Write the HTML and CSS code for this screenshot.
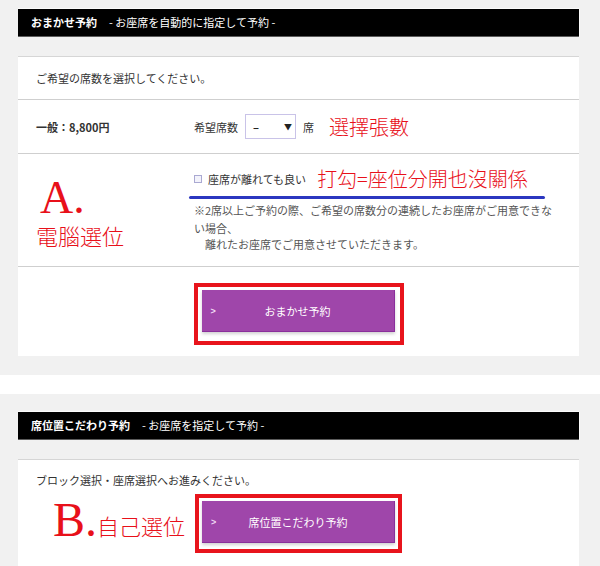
FILE: index.html
```html
<!DOCTYPE html>
<html lang="ja">
<head>
<meta charset="utf-8">
<title>おまかせ予約</title>
<link rel="stylesheet" href="styles.css">
</head>
<body>
<section class="sec sec-first">
  <h2 class="bar"><span class="bar-title">おまかせ予約</span><span class="bar-sub">- お座席を自動的に指定して予約 -</span></h2>
  <div class="card">
    <div class="row row-intro">ご希望の席数を選択してください。</div>
    <div class="row row-price">
      <div class="price">一般：8,800円</div>
      <div class="seats">
        <span>希望席数</span>
        <span class="select"><span class="select-val">–</span><span class="select-arrow">▼</span></span>
        <span>席</span>
        <span class="red red-seats">選擇張數</span>
      </div>
    </div>
    <div class="row row-option">
      <div class="anno">
        <div class="anno-letter">A.</div>
        <div class="anno-text">電腦選位</div>
      </div>
      <div class="option">
        <div class="check-line">
          <label class="check"><span class="box"></span>座席が離れても良い</label>
          <span class="red red-check">打勾=座位分開也沒關係</span>
        </div>
        <div class="marker"></div>
        <p class="note">※2席以上ご予約の際、ご希望の席数分の連続したお座席がご用意できな<br>い場合、</p>
        <p class="note note-2">　離れたお座席でご用意させていただきます。</p>
      </div>
    </div>
    <div class="row row-btn">
      <div class="frame frame-a">
        <a class="btn"><span class="chev">&gt;</span><span class="btn-text">おまかせ予約</span><span></span></a>
      </div>
    </div>
  </div>
</section>
<div class="band"></div>
<section class="sec sec-second">
  <h2 class="bar"><span class="bar-title">席位置こだわり予約</span><span class="bar-sub">- お座席を指定して予約 -</span></h2>
  <div class="card card2">
    <p class="intro2">ブロック選択・座席選択へお進みください。</p>
    <div class="b-row">
      <div class="anno-b">
        <span class="anno-letter-b">B.</span>
        <span class="anno-text-b">自己選位</span>
      </div>
      <div class="frame frame-b">
        <a class="btn"><span class="chev">&gt;</span><span class="btn-text">席位置こだわり予約</span><span></span></a>
      </div>
      <div></div>
    </div>
  </div>
</section>
</body>
</html>
```
FILE: styles.css
```css
* { box-sizing: border-box; }

body {
  margin: 0;
  background: #f1f1f1;
  font-family: "Noto Sans CJK JP", "Liberation Sans", sans-serif;
  font-size: 11px;
  color: #333;
}

.sec { padding: 0 21px 0 18px; }
.sec-first { padding-top: 9px; }
.sec-second { padding-top: 18px; }

.bar {
  margin: 0;
  height: 28px;
  background: #000;
  border-bottom: 1px solid #5c5c5c;
  box-shadow: 0 -1px 0 #fbfbfb, 1px 0 0 #fbfbfb;
  color: #fff;
  display: flex;
  align-items: center;
  padding-left: 13px;
  font-size: 11px;
  font-weight: normal;
  line-height: 1;
}
.bar-title { font-weight: bold; margin-right: 12px; }

.card {
  margin-top: 19px;
  background: #fff;
  border-top: 1px solid #d6d6d6;
}

.row {
  border-bottom: 1px solid #cfcfcf;
  padding-left: 18px;
}
.row-intro {
  height: 43px;
  display: flex;
  align-items: center;
}
.row-price {
  height: 54px;
  display: grid;
  grid-template-columns: 158px 1fr;
  align-items: center;
}
.price { font-weight: bold; }
.seats {
  display: flex;
  align-items: center;
  gap: 7px;
}
.select {
  width: 51px;
  height: 25px;
  border: 1px solid #c9c3e8;
  display: inline-flex;
  align-items: center;
  justify-content: space-between;
  padding: 0 3px 0 7px;
  color: #222;
}
.select-val { font-weight: bold; }
.select-arrow { font-size: 8px; }

.red {
  color: #e8101a;
  font-family: "Noto Sans CJK TC", "Noto Sans CJK JP", sans-serif;
  font-weight: 300;
  font-size: 20px;
  line-height: 20px;
}
.red-seats { margin-left: 8px; }

.row-option {
  height: 113px;
  display: grid;
  grid-template-columns: 158px 1fr;
  align-items: start;
}
.anno { padding: 21px 0 0 4px; color: #e8101a; }
.anno-letter {
  font-family: "Liberation Serif", serif;
  font-size: 46px;
  line-height: 46px;
}
.anno-text {
  margin: 2px 0 0 -4px;
  font-family: "Noto Sans CJK TC", "Noto Sans CJK JP", sans-serif;
  font-weight: 300;
  font-size: 22px;
  line-height: 24px;
}
.option { padding-top: 15px; }
.check-line {
  display: flex;
  align-items: center;
  height: 20px;
}
.check {
  display: flex;
  align-items: center;
  line-height: 16px;
}
.box {
  width: 8px;
  height: 8px;
  border: 1px solid #aaa9d2;
  background: #f3f3fb;
  margin-right: 6px;
}
.red-check { margin-left: 11px; }
.marker {
  margin: 7px 0 0 -5px;
  width: 356px;
  height: 3px;
  background: #2b37c0;
  border-radius: 2px;
}
.note {
  margin: 2px 0 0 0;
  line-height: 18px;
  color: #555;
}
.note-2 { margin-top: 0; line-height: 14px; }

.row-btn {
  height: 89px;
  border-bottom: 0;
  padding: 16px 18px 0 18px;
  display: flex;
  justify-content: center;
  align-items: flex-start;
}

.frame {
  border: 4px solid #e8141c;
  background: #fff;
}
.frame-a { padding: 3px 5px 9px 4px; }
.frame-b { padding: 3px 3px 6px 3px; }

.btn {
  width: 193px;
  height: 42px;
  background: #9f46aa;
  border-right: 1px solid #8a2f9b;
  border-bottom: 1px solid #8a2f9b;
  box-shadow: 0 2px 3px rgba(0, 0, 0, 0.18);
  color: #fff;
  display: grid;
  grid-template-columns: 1fr auto 1fr;
  align-items: center;
  font-size: 11px;
  text-decoration: none;
}
.chev {
  padding-left: 9px;
  font-size: 9px;
  color: #f0dcf4;
  font-family: "Liberation Sans", sans-serif;
  font-weight: bold;
}

.band {
  margin-top: 19px;
  height: 19px;
  background: #fff;
}

.card2 {
  padding: 12px 18px 20px 18px;
}
.intro2 {
  margin: 0;
  line-height: 16px;
}
.b-row {
  margin-top: 6px;
  display: grid;
  grid-template-columns: 1fr auto 1fr;
  align-items: start;
}
.anno-b {
  display: flex;
  padding: 2px 0 0 17px;
  color: #e8101a;
}
.anno-letter-b {
  font-family: "Liberation Serif", serif;
  font-size: 48px;
  line-height: 48px;
}
.anno-text-b {
  align-self: flex-end;
  margin-bottom: 7px;
  font-family: "Noto Sans CJK TC", "Noto Sans CJK JP", sans-serif;
  font-weight: 300;
  font-size: 22px;
  line-height: 24px;
}
```
